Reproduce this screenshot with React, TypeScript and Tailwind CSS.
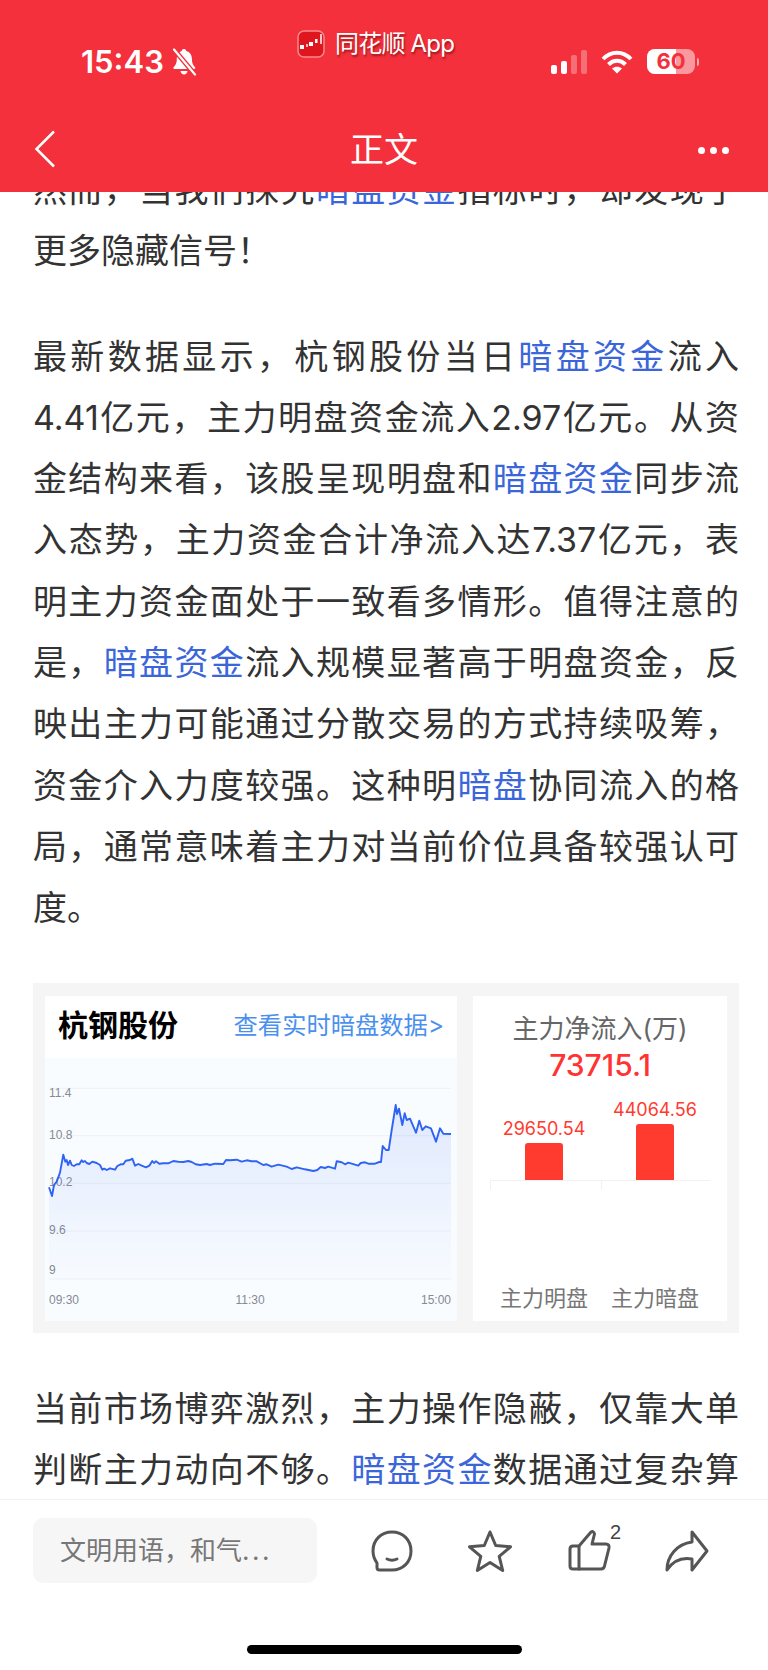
import React from "react"

const paragraphsTop = [
  ["然而，当我们探究暗盘资金指标时，却发现了", "更多隐藏信号！"],
  [
    "最新数据显示，杭钢股份当日暗盘资金流入",
    "4.41亿元，主力明盘资金流入2.97亿元。从资",
    "金结构来看，该股呈现明盘和暗盘资金同步流",
    "入态势，主力资金合计净流入达7.37亿元，表",
    "明主力资金面处于一致看多情形。值得注意的",
    "是，暗盘资金流入规模显著高于明盘资金，反",
    "映出主力可能通过分散交易的方式持续吸筹，",
    "资金介入力度较强。这种明暗盘协同流入的格",
    "局，通常意味着主力对当前价位具备较强认可",
    "度。",
  ],
]

const paragraphBottom = [
  "当前市场博弈激烈，主力操作隐蔽，仅靠大单",
  "判断主力动向不够。暗盘资金数据通过复杂算",
  "法追踪主力真实意图，帮助投资者看清资金流",
]

// traced from the reference at 3x, mapped into the chart's own box below
const trace = [
  [57, 622], [66, 648], [72, 615], [80, 605], [90, 578], [100, 524], [106, 545], [110, 540], [114, 555], [120, 542],
  [125, 555], [132, 558], [140, 553], [148, 553], [155, 541], [160, 546], [165, 543], [170, 549], [178, 552], [187, 545],
  [200, 549], [210, 555], [217, 569], [223, 566], [230, 570], [240, 565], [255, 569], [262, 558], [272, 553], [280, 553],
  [287, 542], [300, 540], [307, 536], [315, 557], [325, 552], [335, 557], [348, 562], [358, 557], [367, 543], [372, 549],
  [378, 544], [388, 551], [400, 550], [415, 550], [430, 543], [445, 545], [460, 546], [475, 543], [485, 546], [497, 553],
  [510, 555], [530, 552], [540, 555], [555, 551], [580, 552], [588, 540], [600, 541], [620, 539], [635, 545], [650, 541],
  [665, 544], [680, 544], [700, 555], [710, 553], [725, 560], [745, 554], [770, 560], [785, 567], [800, 562], [825, 568],
  [850, 573], [862, 570], [872, 561], [885, 564], [895, 560], [915, 566], [920, 544], [935, 547], [945, 553], [955, 548],
  [985, 557], [992, 549], [1005, 547], [1015, 551], [1035, 551], [1048, 546], [1053, 546], [1058, 498], [1068, 510],
  [1076, 510], [1085, 450], [1097, 375], [1101, 402], [1107, 386], [1117, 435], [1124, 400], [1130, 420], [1140, 416],
  [1158, 458], [1168, 422], [1177, 450], [1187, 439], [1203, 445], [1218, 485], [1230, 445], [1240, 461], [1263, 462],
]

const linePoints = trace.map(([x, y]) => `${(x / 3 - 15).toFixed(1)},${(y / 3 - 78).toFixed(1)}`).join(" ")

function ArticleLine({ text, last }: { text: string; last: boolean }) {
  const parts = text.split(/(暗盘资金|暗盘)/)
  return (
    <div className={last ? "h-[61.3px] whitespace-nowrap" : "h-[61.3px] whitespace-nowrap text-justify [text-align-last:justify]"}>
      {parts.map((part, i) =>
        part === "暗盘资金" || part === "暗盘" ? (
          <span key={i} className="text-[#3b66d9]">
            {part}
          </span>
        ) : (
          <span key={i}>{part}</span>
        ),
      )}
    </div>
  )
}

function Paragraph({ lines, clipTail }: { lines: string[]; clipTail?: boolean }) {
  return (
    <div className="mb-[44px]">
      {lines.map((line, i) => (
        <ArticleLine key={i} text={line} last={!clipTail && i === lines.length - 1} />
      ))}
    </div>
  )
}

function StatusBar() {
  return (
    <div className="relative h-[76px] shrink-0">
      <div className="absolute left-[297px] top-[29px] flex items-center gap-[10px]">
        <svg width="28" height="28" viewBox="0 0 28 28">
          <rect x="1" y="1" width="26" height="26" rx="6" fill="#e0161f" stroke="#f58a8f" strokeWidth="1.5" />
          <rect x="3" y="15" width="4" height="4" fill="#fff" />
          <rect x="9" y="14" width="2" height="3" fill="#fbb" />
          <rect x="12" y="12" width="4" height="4" fill="#fff" />
          <rect x="18" y="9" width="2.5" height="4" fill="#fff" />
          <path d="M24 4v10" stroke="#fff" strokeWidth="1.5" />
        </svg>
        <span className="text-[24px] leading-[30px] tracking-[-0.8px] text-white [text-shadow:1px_2px_2px_rgba(90,0,0,0.55)]">同花顺 App</span>
      </div>

      <div className="absolute left-[81px] top-[44px] flex items-center gap-[7px]">
        <span className="text-[31px] font-semibold leading-[36px] text-white">15:43</span>
        <svg width="27" height="28" viewBox="0 0 27 28" fill="#fff">
          <path d="M13 1c1.4 0 2.2.9 2.3 2.1 3.6 1 5.6 4 5.6 7.9 0 3.6.8 6 3.1 8.2.6.6.2 1.8-.8 1.8H3.4c-1 0-1.4-1.2-.8-1.8C5 17 5.8 14.600 5.800 11c0-3.900 2-6.900 4.900-7.900C10.800 1.900 11.600 1 13 1z" />
          <path d="M9.500 23h7c-.3 2.200-1.700 3.500-3.500 3.500s-3.200-1.300-3.500-3.500z" />
          <path d="M3 1.500l21 25" stroke="#f3303b" strokeWidth="5" />
          <path d="M3 1.500l21 25" stroke="#fff" strokeWidth="2.200" strokeLinecap="round" />
        </svg>
      </div>

      <div className="absolute left-[551px] top-[49px] flex items-center">
        <div className="flex h-[25px] items-end gap-[4px]">
          <div className="h-[9px] w-[6px] rounded-[2px] bg-white" />
          <div className="h-[13px] w-[6px] rounded-[2px] bg-white" />
          <div className="h-[19px] w-[6px] rounded-[2px] bg-white/30" />
          <div className="h-[24px] w-[6px] rounded-[2px] bg-white/30" />
        </div>
        <svg className="ml-[14px]" width="32" height="24" viewBox="0 0 32 24" fill="none" stroke="#fff" strokeWidth="4">
          <path d="M2 9c8-8.500 20-8.500 28 0" />
          <path d="M7.500 14.500c5-5 12-5 17 0" />
          <path d="M16 23.500l-5-5c3-2.500 7-2.500 10 0z" fill="#fff" stroke="none" />
        </svg>
        <div className="relative ml-[14px] flex h-[25px] w-[48px] overflow-hidden rounded-[8px] bg-white/50">
          <div className="h-full w-[29px] bg-white" />
          <span className="absolute inset-0 text-center text-[22px] font-bold leading-[25px] text-[#f3303b]">60</span>
        </div>
        <div className="ml-[2px] h-[8px] w-[2px] rounded-r-full bg-white/60" />
      </div>
    </div>
  )
}

function NavBar() {
  return (
    <div className="relative flex h-[116px] shrink-0 items-center justify-center pt-[32px]">
      <svg className="absolute left-[34px] top-[54px]" width="22" height="38" viewBox="0 0 22 38" fill="none" stroke="#fff" strokeWidth="2.500">
        <path d="M20 1.500L2.500 19 20 36.500" />
      </svg>
      <span className="text-[34px] leading-[40px] text-white">正文</span>
      <div className="absolute left-[698px] top-[71px] flex gap-[5px]">
        <div className="h-[7px] w-[7px] rounded-full bg-white" />
        <div className="h-[7px] w-[7px] rounded-full bg-white" />
        <div className="h-[7px] w-[7px] rounded-full bg-white" />
      </div>
    </div>
  )
}

function PriceChart() {
  const grid = [30.3, 77.700, 125.300, 173, 221]
  return (
    <svg className="block" width="412" height="263" viewBox="0 0 412 263">
      <defs>
        <linearGradient id="areaFill" x1="0" y1="0" x2="0" y2="1">
          <stop offset="0" stopColor="#5b86f5" stopOpacity="0.16" />
          <stop offset="1" stopColor="#5b86f5" stopOpacity="0.01" />
        </linearGradient>
      </defs>
      {grid.map((y) => (
        <line key={y} x1="4" x2="406" y1={y} y2={y} stroke="#edf0f6" strokeWidth="1" />
      ))}
      <g fill="#858a93" fontSize="12" fontFamily="'Liberation Sans', sans-serif">
        <text x="4" y="39">11.4</text>
        <text x="4" y="81">10.8</text>
        <text x="4" y="128">10.2</text>
        <text x="4" y="176">9.6</text>
        <text x="4" y="216">9</text>
        <text x="4" y="246">09:30</text>
        <text x="205" y="246" textAnchor="middle">11:30</text>
        <text x="406" y="246" textAnchor="end">15:00</text>
      </g>
      <polygon points={`4,221 ${linePoints} 406,221`} fill="url(#areaFill)" />
      <polyline points={linePoints} fill="none" stroke="#2f63f5" strokeWidth="1.900" strokeLinejoin="round" />
    </svg>
  )
}

function FlowChart() {
  return (
    <svg className="block" width="254" height="236" viewBox="0 0 254 236">
      <g fill="#ff3b30" fontSize="18" textAnchor="middle" fontFamily="Inter, 'Noto Sans CJK SC', sans-serif">
        <text x="71" y="50">29650.54</text>
        <text x="182" y="31">44064.56</text>
      </g>
      <path d="M52 95V61q0-3 3-3h32q3 0 3 3v34zM163 95V42q0-3 3-3h32q3 0 3 3v53z" fill="#ff3b30" />
      <path d="M17 95.500h220M17.500 95v10M128.500 95v10" stroke="#f1f1f1" strokeWidth="1" fill="none" />
      <g fill="#777" fontSize="22" textAnchor="middle" fontFamily="'Noto Sans CJK SC', sans-serif">
        <text x="71" y="221">主力明盘</text>
        <text x="182" y="221">主力暗盘</text>
      </g>
    </svg>
  )
}

function StockCard() {
  return (
    <div className="mb-[45px] flex gap-[16px] bg-[#f5f5f5] px-[12px] pb-[12px] pt-[13px]">
      <div className="h-[325px] w-[412px] shrink-0 bg-white">
        <div className="flex h-[62px] items-center justify-between pb-[4px] pl-[13px] pr-[13px]">
          <span className="text-[30px] font-bold leading-[36px] text-black">杭钢股份</span>
          <span className="text-[24.300px] leading-[32px] text-[#4a90ee]">查看实时暗盘数据&gt;</span>
        </div>
        <div className="bg-[#f9fcff]">
          <PriceChart />
        </div>
      </div>
      <div className="h-[325px] w-[254px] shrink-0 overflow-hidden bg-white">
        <div className="pt-[17px] text-center text-[26px] leading-[32px] text-[#666]">主力净流入(万)</div>
        <div className="text-center text-[30px] font-medium leading-[40px] text-[#ff3333]">73715.1</div>
        <FlowChart />
      </div>
    </div>
  )
}

function ActionIcons() {
  return (
    <div className="ml-[53px] flex items-center">
      <svg width="44" height="44" viewBox="0 0 44 44" fill="none" stroke="#555" strokeWidth="3" strokeLinejoin="round" strokeLinecap="round">
        <path d="M22 3c11 0 19 8 19 19s-8 19-19 19H9.500c-1.500 0-2.500-1-2.500-2.500V34c-2.500-3.500-4-7.500-4-12C3 11 11 3 22 3z" />
        <path d="M17 30q5 2.500 10 0" />
      </svg>
      <svg className="ml-[54px]" width="44" height="44" viewBox="0 0 44 44" fill="none" stroke="#555" strokeWidth="3" strokeLinejoin="round">
        <path d="M22 3l5.700 13.500 14.800 1.300-11.300 9.600 3.500 14.100L22 33.500 9.300 41.500l3.500-14.100L1.500 17.800l14.800-1.300z" />
      </svg>
      <div className="relative ml-[56px] h-[44px] w-[44px]">
        <svg width="44" height="44" viewBox="0 0 44 44" fill="none" stroke="#555" strokeWidth="3" strokeLinejoin="round" strokeLinecap="round">
          <path d="M11 17L23 3q2.500-1.500 3.500 2L24 15h14q3.500 0 3 4l-4.500 18q-.5 3-3.500 3H5q-3 0-3-3V20q0-3 3-3z" />
          <path d="M11 17v23" />
        </svg>
        <span className="absolute left-[42px] top-[-9px] font-['Liberation_Sans',sans-serif] text-[20px] leading-[24px] text-[#444]">2</span>
      </div>
      <svg className="ml-[53px]" width="44" height="44" viewBox="0 0 44 44" fill="none" stroke="#555" strokeWidth="3" strokeLinejoin="round">
        <path d="M27 3l15 19-15 19V30C16 28 8 32 2 41c0-14 10-26 25-28z" />
      </svg>
    </div>
  )
}

export default function App() {
  return (
    <div className="flex h-[1670px] w-[768px] flex-col overflow-hidden bg-white font-['Inter','Noto_Sans_CJK_SC',sans-serif]">
      <header className="flex h-[192px] shrink-0 flex-col bg-[#f3303b]">
        <StatusBar />
        <NavBar />
      </header>

      <main className="min-h-0 flex-1 overflow-hidden pl-[33px] pr-[29px] text-[34px] leading-[61.3px] text-[#333]">
        <div className="mt-[-33px]">
          {paragraphsTop.map((lines, i) => (
            <Paragraph key={i} lines={lines} />
          ))}
          <StockCard />
          <Paragraph lines={paragraphBottom} clipTail />
        </div>
      </main>

      <footer className="h-[171px] shrink-0 border-t border-[#f1f1f1] bg-white pl-[33px] pt-[18px]">
        <div className="flex items-center">
          <div className="flex h-[65px] w-[284px] items-center rounded-[10px] bg-[#f6f6f6] pl-[27px] text-[26px] text-[#777]">
            文明用语，和气<span className="tracking-[2.5px]">...</span>
          </div>
          <ActionIcons />
        </div>
        <div className="ml-[214px] mt-[62px] h-[9px] w-[275px] rounded-full bg-black" />
      </footer>
    </div>
  )
}
